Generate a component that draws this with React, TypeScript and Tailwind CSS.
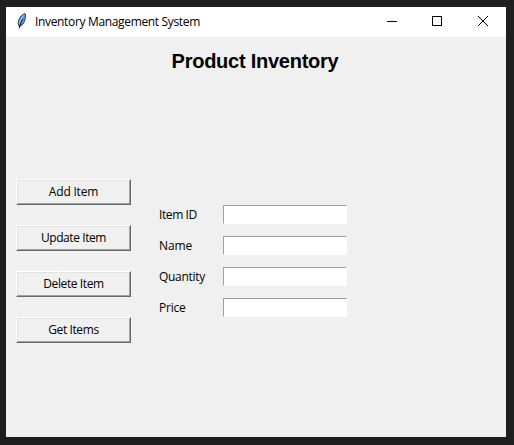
const actions = [
  { label: 'Add Item', tracking: 'tracking-[-0.2px]' },
  { label: 'Update Item', tracking: 'tracking-[-0.42px]' },
  { label: 'Delete Item', tracking: 'tracking-[-0.4px]' },
  { label: 'Get Items', tracking: 'tracking-[-0.4px]' },
];

const fields = [
  { label: 'Item ID', tracking: 'tracking-[-0.4px]' },
  { label: 'Name', tracking: 'tracking-[-0.1px]' },
  { label: 'Quantity', tracking: 'tracking-[-0.3px]' },
  { label: 'Price', tracking: 'tracking-[-0.2px]' },
];

function FeatherIcon() {
  return (
    <svg width="16" height="16" viewBox="0 0 16 16" className="shrink-0 overflow-visible">
      <path d="M11 -0.4C7.5 0.6 4.3 4.6 4.2 9.5L5 12.2L6.8 12C9.8 10 11.8 6 11.5 0.4Z" fill="#5b9ce6" stroke="#252c36" strokeWidth="0.9" />
      <path d="M10 1.2C7.4 3.5 5.8 7 5.4 10" fill="none" stroke="#b4cdea" strokeWidth="0.8" />
      <path d="M8.8 5C7.2 8 6 10.5 5.2 14.5" fill="none" stroke="#0a0a0a" strokeWidth="0.9" />
    </svg>
  );
}

function TitleBar() {
  return (
    <header className="flex h-[30px] shrink-0 items-center bg-white">
      <div className="flex flex-1 items-center gap-[5px] pl-[8px]">
        <FeatherIcon />
        <span className="text-xs leading-4 tracking-[-0.34px] whitespace-nowrap">Inventory Management System</span>
      </div>
      <svg width="136" height="30" viewBox="0 0 136 30" fill="none" stroke="#000" className="shrink-0" shapeRendering="crispEdges">
        <path d="M17 14.5H27" />
        <rect x="62.5" y="9.5" width="9" height="9" />
        <path d="M108 9L118 19M118 9L108 19" shapeRendering="geometricPrecision" />
      </svg>
    </header>
  );
}

export default function App() {
  return (
    <div className="h-[445px] w-[514px] overflow-hidden bg-[#1e1e1e] pt-[7px] pl-[6px] font-['Open_Sans','Noto_Sans',sans-serif] text-black">
      <main className="flex h-[430px] w-[500px] flex-col bg-[#f0f0f0]">
        <TitleBar />
        <h1 className="mt-[11px] h-[26px] pr-[2px] text-center font-['Liberation_Sans',Arial,sans-serif] text-[20px] leading-[26px] font-bold tracking-[-0.25px] whitespace-nowrap">
          Product Inventory
        </h1>
        <div className="mt-[105px] flex pl-[10px]">
          <div className="flex flex-col gap-5">
            {actions.map(({ label, tracking }) => (
              <button
                key={label}
                className="h-[26px] w-[115px] border border-t-white border-r-[#696969] border-b-[#696969] border-l-white bg-[#f0f0f0]"
              >
                <span className={`flex h-full items-center justify-center border border-t-[#e3e3e3] border-r-[#a0a0a0] border-b-[#a0a0a0] border-l-[#e3e3e3] text-xs ${tracking}`}>
                  {label}
                </span>
              </button>
            ))}
          </div>
          <form className="mt-[26px] ml-[28px] flex flex-col gap-3">
            {fields.map(({ label, tracking }) => (
              <label key={label} className="flex h-[19px] items-center">
                <span className={`w-[64px] text-xs ${tracking}`}>{label}</span>
                <input className="h-[19px] w-[124px] border border-t-[#a0a0a0] border-r-white border-b-white border-l-[#a0a0a0] bg-white outline-none" />
              </label>
            ))}
          </form>
        </div>
      </main>
    </div>
  );
}
